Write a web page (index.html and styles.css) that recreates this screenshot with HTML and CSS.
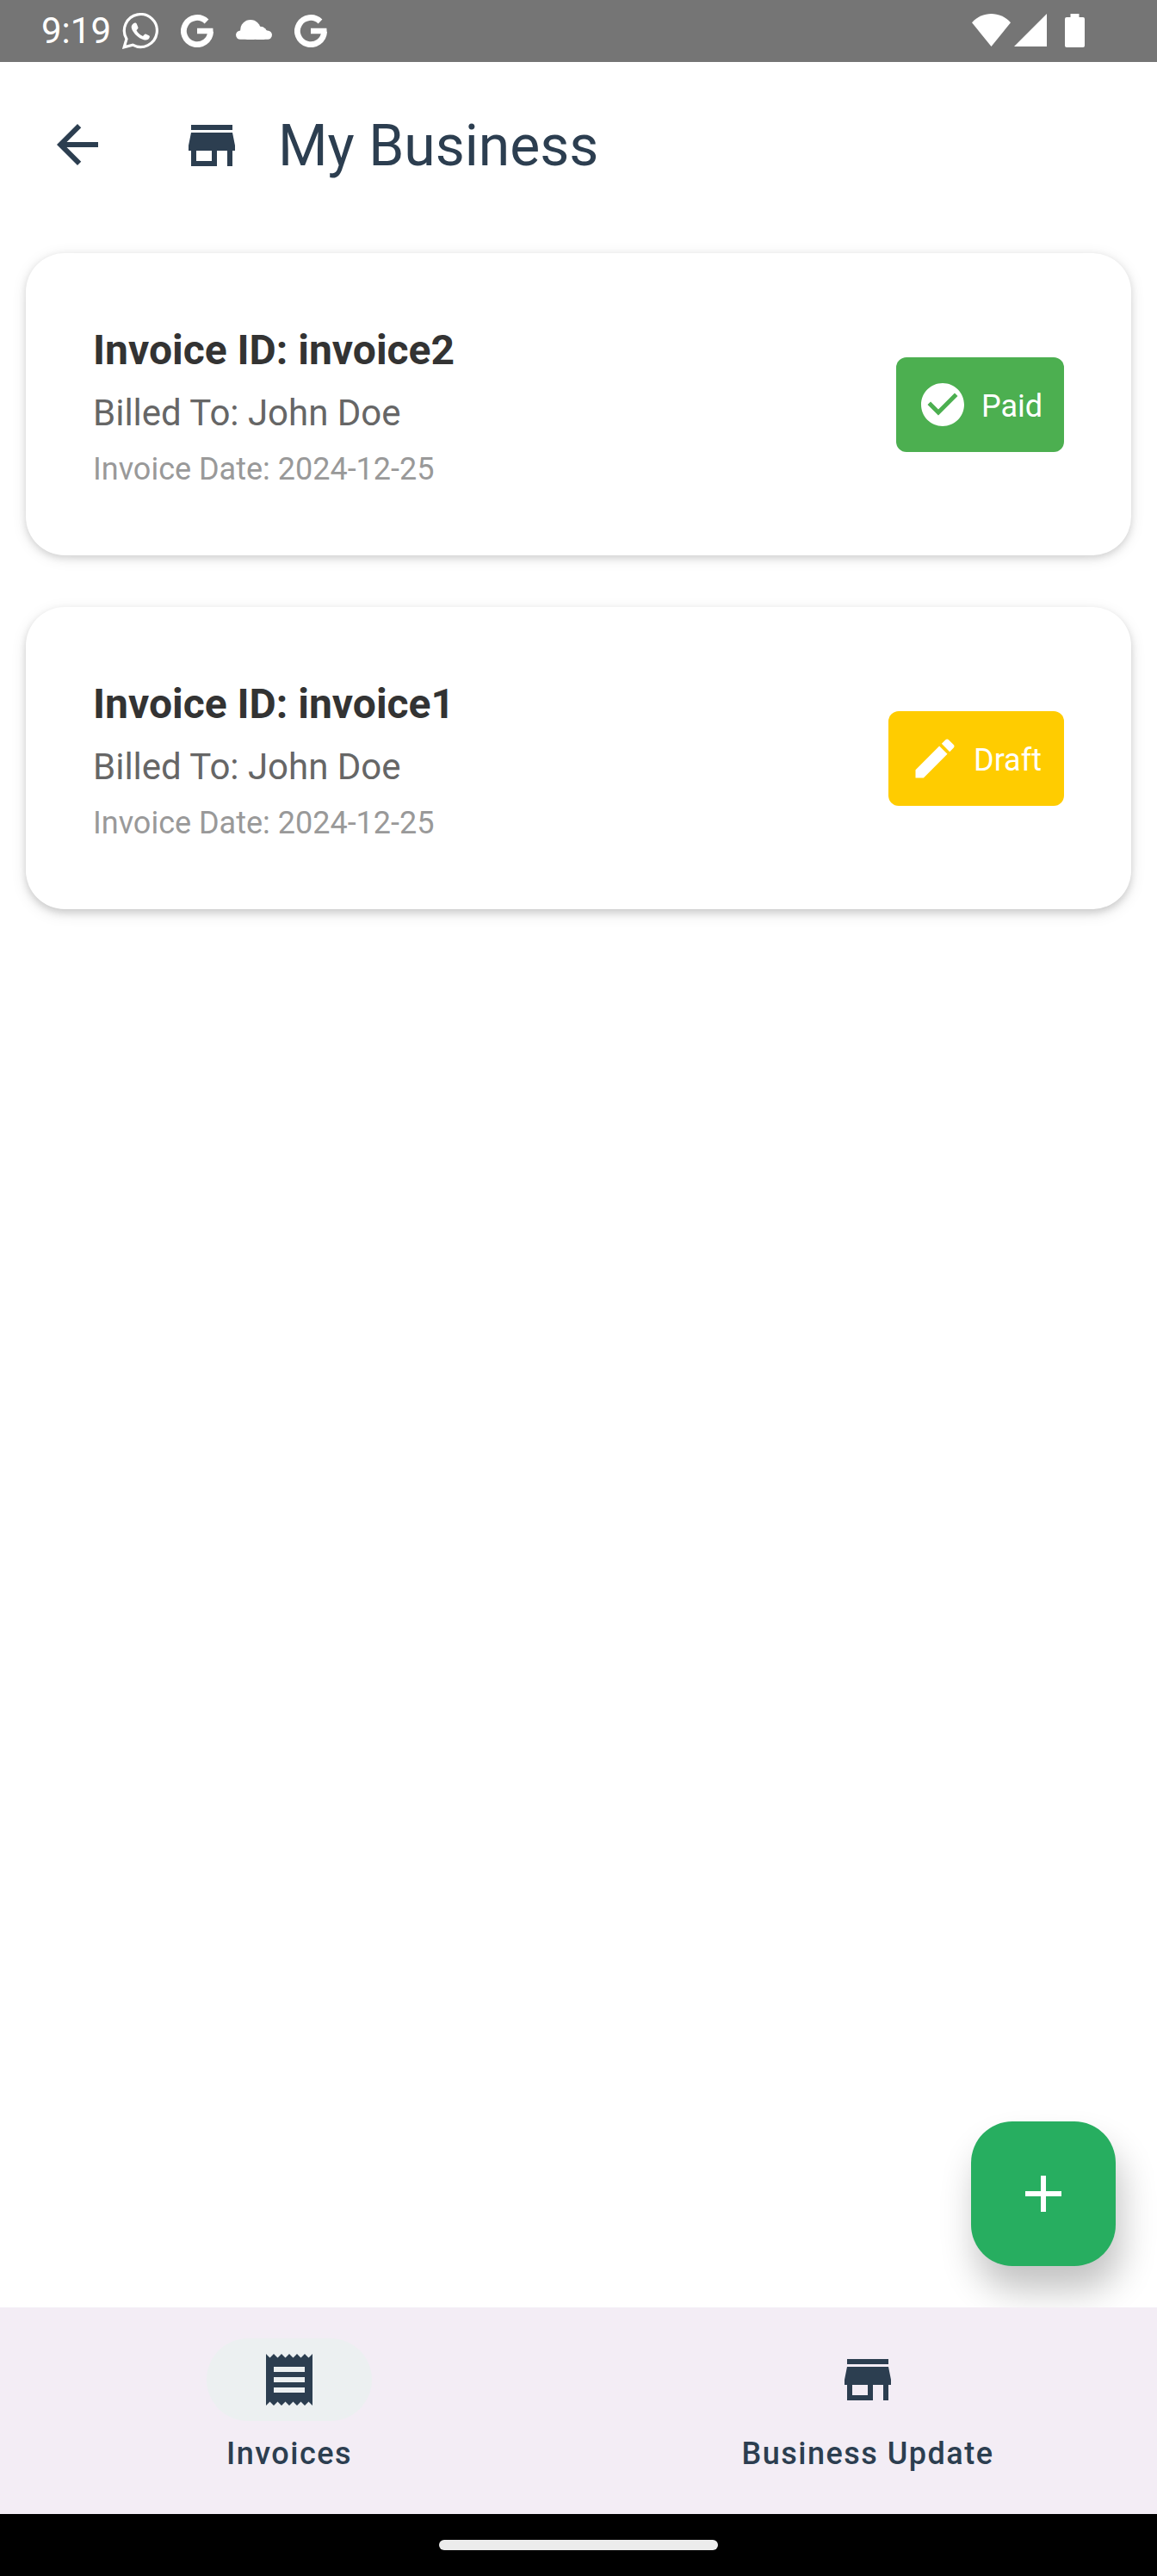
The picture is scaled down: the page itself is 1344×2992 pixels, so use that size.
FILE: index.html
```html
<!DOCTYPE html>
<html lang="en">
<head>
<meta charset="utf-8">
<title>My Business</title>
<link rel="stylesheet" href="styles.css">
</head>
<body>
<svg class="defs" width="0" height="0">
  <symbol id="store" viewBox="0 0 24 24"><path d="M20 4H4v2h16V4zm1 10v-2l-1-5H4l-1 5v2h1v6h10v-6h4v6h2v-6h1zm-9 4H6v-4h6v4z"/></symbol>
  <symbol id="google" viewBox="0 0 38 38"><path d="M30 8A15.6 15.6 0 1 0 34.6 19.6" fill="none" stroke="#fff" stroke-width="6.8"/><path d="M19 15.7h18.4q.4 3.5-.2 6.5H19z"/></symbol>
</svg>
<div class="screen">
  <header class="status">
    <span class="clock">9:19</span>
    <svg class="whatsapp" viewBox="0 0 42 42"><path d="M2.2 39.8L5 30.2A19 19 0 1 1 12.2 37.2Z" fill="none" stroke="#fff" stroke-width="3.2"/><path d="M13.3 12.1C14.5 11.2 16.3 11.5 16.9 13L18.4 16.7C18.7 17.7 18.2 18.4 16.5 20.2C18.3 23.3 20.6 25.5 24 27C25.7 25 26.3 24.1 27.3 24.5L31 26.3C32.1 26.8 32 27.4 31.7 28.6C31 31.1 28 32.2 25 31.2C18.2 29 13.8 24.2 11.2 18.9C10 16.2 10.8 13.8 13.3 12.1Z"/></svg>
    <svg class="google" viewBox="0 0 38 38"><use href="#google"/></svg>
    <svg class="cloud" viewBox="0 0 42 23"><rect y="12.4" width="42" height="10.3" rx="5.15"/><circle cx="17" cy="11.8" r="11.8"/><circle cx="28.3" cy="16" r="8.3" /><path d="M5 12.5h31v8H5z"/></svg>
    <svg class="google second" viewBox="0 0 38 38"><use href="#google"/></svg>
    <svg class="wifi" viewBox="0 0 45 38"><path d="M0 10.3C12-3.4 33-3.4 45 10.3L22.5 38z"/></svg>
    <svg class="signal" viewBox="0 0 38 38"><path d="M38 0v38H0z"/></svg>
    <svg class="battery" viewBox="0 0 23 39"><path d="M6.5 0h10v4H21a2 2 0 0 1 2 2v31a2 2 0 0 1-2 2H2a2 2 0 0 1-2-2V6a2 2 0 0 1 2-2h4.5z"/></svg>
  </header>
  <div class="appbar">
    <svg class="back" viewBox="0 0 24 24"><path d="M20 11H7.83l5.59-5.59L12 4l-8 8 8 8 1.41-1.41L7.83 13H20v-2z"/></svg>
    <svg class="shop" viewBox="0 0 24 24"><use href="#store"/></svg>
    <h1 class="title">My Business</h1>
  </div>
  <main class="list">
    <article class="card">
      <div class="info">
        <h2 class="invoice-id">Invoice ID: invoice2</h2>
        <p class="billed">Billed To: John Doe</p>
        <p class="date">Invoice Date: 2024-12-25</p>
      </div>
      <div class="badge paid">
        <svg viewBox="0 0 24 24"><path d="M12 2C6.48 2 2 6.48 2 12s4.48 10 10 10 10-4.48 10-10S17.52 2 12 2zm-2 15l-5-5 1.41-1.41L10 14.17l7.59-7.59L19 8l-9 9z"/></svg>
        <span>Paid</span>
      </div>
    </article>
    <article class="card">
      <div class="info">
        <h2 class="invoice-id">Invoice ID: invoice1</h2>
        <p class="billed">Billed To: John Doe</p>
        <p class="date">Invoice Date: 2024-12-25</p>
      </div>
      <div class="badge draft">
        <svg viewBox="0 0 24 24"><path d="M3 17.25V21h3.75L17.81 9.94l-3.75-3.75L3 17.25zM20.71 7.04c.39-.39.39-1.02 0-1.41l-2.34-2.34c-.39-.39-1.02-.39-1.41 0l-1.83 1.83 3.75 3.75 1.83-1.83z"/></svg>
        <span>Draft</span>
      </div>
    </article>
    <button class="fab" aria-label="Add invoice"><svg viewBox="0 0 24 24"><path d="M19 13h-6v6h-2v-6H5v-2h6V5h2v6h6v2z"/></svg></button>
  </main>
  <nav class="nav">
    <a class="tab active">
      <span class="pill"><svg viewBox="0 0 24 24"><path d="M18 17H6v-2h12v2zm0-4H6v-2h12v2zm0-4H6V7h12v2zM3 22l1.5-1.5L6 22l1.5-1.5L9 22l1.5-1.5L12 22l1.5-1.5L15 22l1.5-1.5L18 22l1.5-1.5L21 22V2l-1.5 1.5L18 2l-1.5 1.5L15 2l-1.5 1.5L12 2l-1.5 1.5L9 2 7.5 3.5 6 2 4.5 3.5 3 2v20z"/></svg></span>
      <span class="label">Invoices</span>
    </a>
    <a class="tab">
      <span class="pill"><svg viewBox="0 0 24 24"><use href="#store"/></svg></span>
      <span class="label">Business Update</span>
    </a>
  </nav>
  <footer class="gesture"><span class="handle"></span></footer>
</div>
</body>
</html>
```
FILE: styles.css
```css
* { box-sizing: border-box; margin: 0; padding: 0; }
body { background: #fff; font-family: Roboto, "Liberation Sans", sans-serif; }
svg { display: block; flex: none; fill: currentColor; }
.defs { position: absolute; }
.screen { width: 1344px; height: 2992px; display: flex; flex-direction: column; color: #2c3e50; }

.status { height: 72px; flex: none; display: flex; align-items: flex-start; background: #757575; color: #fff; padding: 15px 84px 0 48px; }
.clock { width: 94px; font-size: 42px; line-height: 42px; }
.whatsapp { width: 42px; height: 42px; }
.google { width: 38px; height: 38px; margin: 2px 0 0 26px; }
.cloud { width: 42px; height: 23px; margin: 8px 0 0 26px; }
.wifi { width: 45px; height: 38px; margin: 1px 0 0 auto; }
.signal { width: 38px; height: 38px; margin: 1px 0 0 4px; }
.battery { width: 23px; height: 39px; margin: 1px 0 0 21px; }

.appbar { height: 192px; flex: none; display: flex; align-items: center; padding-left: 54px; }
.back { width: 72px; height: 72px; }
.shop { width: 72px; height: 72px; margin: 2px 0 0 84px; }
.title { margin: 3px 0 0 41px; font-size: 66px; line-height: 84px; font-weight: 400; }

.list { flex: 1; position: relative; overflow: hidden; display: flex; flex-direction: column; gap: 60px; padding: 30px 30px 0; }
.card { height: 351px; flex: none; display: flex; align-items: center; justify-content: space-between; padding: 0 78px; border-radius: 45px; background: #fff; box-shadow: 0 3px 9px rgba(0,0,0,.13), 0 3px 18px rgba(0,0,0,.09); }
.card + .card { box-shadow: 0 4px 9px rgba(0,0,0,.14), 0 5px 18px rgba(0,0,0,.1); }
.info { margin-top: 5px; }
.invoice-id { font-size: 48px; line-height: 57px; font-weight: 700; color: #333; }
.billed { margin-top: 20px; font-size: 42px; line-height: 49px; color: #666; }
.date { margin-top: 20px; font-size: 36px; line-height: 42px; color: #999; }
.badge { height: 110px; display: flex; align-items: center; gap: 15px; padding-left: 24px; border-radius: 12px; color: #fff; font-size: 36px; line-height: 42px; }
.badge svg { width: 60px; height: 60px; }
.badge span { margin-top: 5px; }
.paid { width: 195px; background: #4caf50; }
.draft { width: 204px; background: #fc0; }
.fab { position: absolute; right: 48px; bottom: 48px; width: 168px; height: 168px; display: grid; place-items: center; border: 0; border-radius: 48px; background: #27ae60; color: #fff; box-shadow: 6px 28px 42px rgba(0,0,0,.24); }
.fab svg { width: 72px; height: 72px; }

.nav { height: 240px; flex: none; display: grid; grid-template-columns: 1fr 1fr; background: #f3edf5; }
.tab { display: flex; flex-direction: column; align-items: center; padding-top: 36px; }
.pill { width: 192px; height: 96px; display: grid; place-items: center; border-radius: 48px; }
.pill svg { width: 72px; height: 72px; }
.active .pill { background: #ecf0f1; }
.label { margin-top: 14px; font-size: 36px; line-height: 48px; font-weight: 500; letter-spacing: 1.5px; }
.gesture { height: 72px; flex: none; display: flex; justify-content: center; align-items: flex-start; padding-top: 30px; background: #000; }
.handle { width: 324px; height: 12px; border-radius: 6px; background: #ececec; }
```
